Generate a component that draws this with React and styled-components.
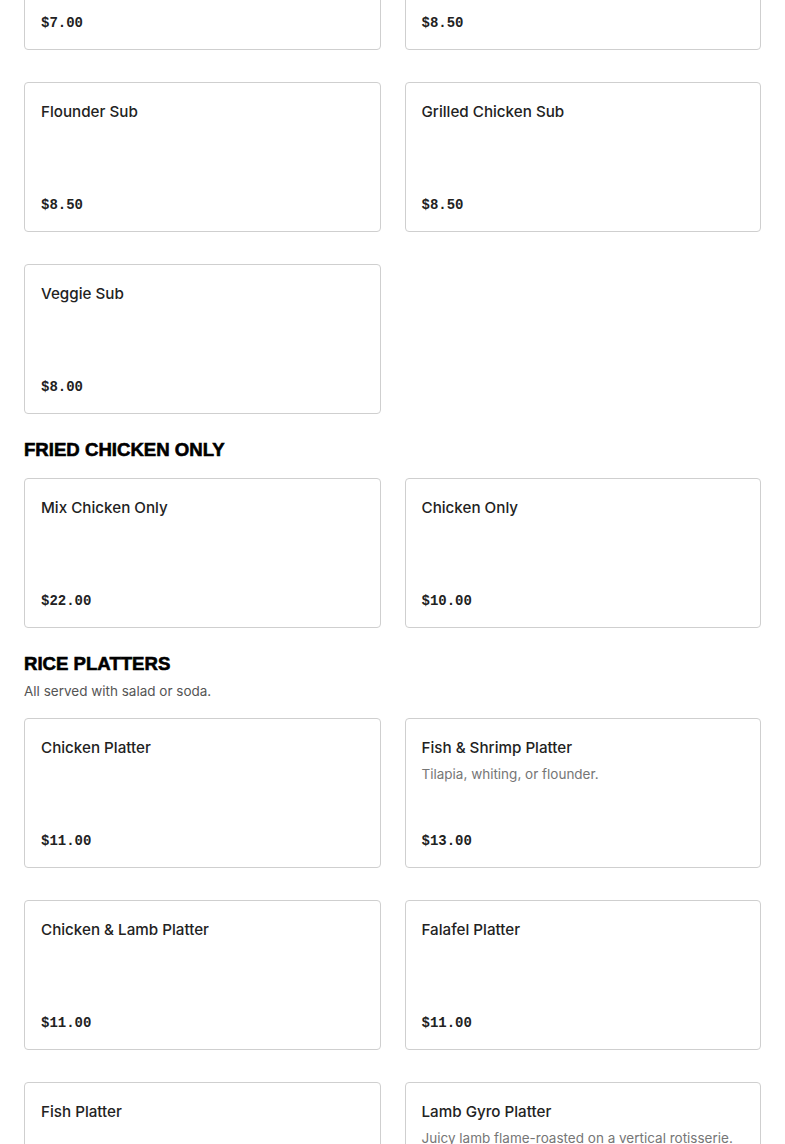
import styled, { createGlobalStyle } from "styled-components"

const GlobalStyle = createGlobalStyle`
  body {
    margin: 0;
    background: #fff;
    font-family: Inter, "Liberation Sans", sans-serif;
    color: #1f1f1f;
  }
`

const Menu = styled.div`
  padding: 0 24px;
  margin-top: -100px;
`

const Section = styled.section`
  padding-top: 24px;
  &:first-child {
    padding-top: 0;
  }
`

const Heading = styled.h2`
  margin: 0;
  font-family: "Liberation Sans", Arial, sans-serif;
  font-weight: 900;
  font-size: 18.6px;
  line-height: 24px;
  text-transform: uppercase;
  color: #000;
  -webkit-text-stroke: 0.6px #000;
`

const SectionNote = styled.p`
  margin: 4px 0 0;
  font-size: 13.5px;
  line-height: 22px;
  color: #555;
`

const Grid = styled.div`
  display: grid;
  grid-template-columns: 1fr 1fr;
  column-gap: 24px;
  row-gap: 32px;
  margin-top: ${(p) => (p.$flush ? "0" : "16px")};
`

const Card = styled.div`
  display: flex;
  flex-direction: column;
  height: 150px;
  box-sizing: border-box;
  padding: 17px 16px 16px;
  border: 1px solid #cfcfcf;
  border-radius: 4px;
  background: #fff;
`

const ItemName = styled.div`
  font-size: 15.2px;
  font-weight: 500;
  line-height: 24px;
  color: #222;
`

const ItemDesc = styled.div`
  margin-top: 4px;
  font-size: 13.5px;
  line-height: 20px;
  color: #767676;
`

const Price = styled.div`
  margin-top: auto;
  font-family: "Liberation Mono", monospace;
  font-weight: 700;
  font-size: 14px;
  line-height: 20px;
  color: #222;
`

const sections = [
  {
    items: [
      { name: "Chicken Sub", price: "$7.00" },
      { name: "Lamb Gyro Sub", price: "$8.50" },
      { name: "Flounder Sub", price: "$8.50" },
      { name: "Grilled Chicken Sub", price: "$8.50" },
      { name: "Veggie Sub", price: "$8.00" },
    ],
  },
  {
    title: "Fried Chicken Only",
    items: [
      { name: "Mix Chicken Only", price: "$22.00" },
      { name: "Chicken Only", price: "$10.00" },
    ],
  },
  {
    title: "Rice Platters",
    note: "All served with salad or soda.",
    items: [
      { name: "Chicken Platter", price: "$11.00" },
      { name: "Fish & Shrimp Platter", desc: "Tilapia, whiting, or flounder.", price: "$13.00" },
      { name: "Chicken & Lamb Platter", price: "$11.00" },
      { name: "Falafel Platter", price: "$11.00" },
      { name: "Fish Platter", price: "$11.00" },
      { name: "Lamb Gyro Platter", desc: "Juicy lamb flame-roasted on a vertical rotisserie.", price: "$12.00" },
    ],
  },
]

export default function App() {
  return (
    <>
      <GlobalStyle />
      <Menu>
        {sections.map((section, i) => (
          <Section key={i}>
            {section.title && <Heading>{section.title}</Heading>}
            {section.note && <SectionNote>{section.note}</SectionNote>}
            <Grid $flush={!section.title}>
              {section.items.map((item) => (
                <Card key={item.name}>
                  <ItemName>{item.name}</ItemName>
                  {item.desc && <ItemDesc>{item.desc}</ItemDesc>}
                  <Price>{item.price}</Price>
                </Card>
              ))}
            </Grid>
          </Section>
        ))}
      </Menu>
    </>
  )
}
